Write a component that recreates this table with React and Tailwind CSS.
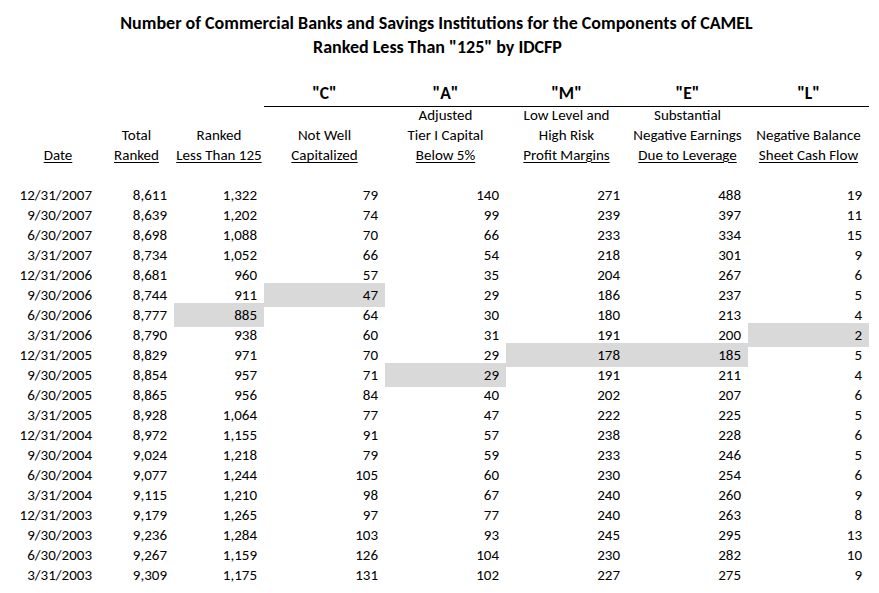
const rows = [
  ["12/31/2007", "8,611", "1,322", "79", "140", "271", "488", "19"],
  ["9/30/2007", "8,639", "1,202", "74", "99", "239", "397", "11"],
  ["6/30/2007", "8,698", "1,088", "70", "66", "233", "334", "15"],
  ["3/31/2007", "8,734", "1,052", "66", "54", "218", "301", "9"],
  ["12/31/2006", "8,681", "960", "57", "35", "204", "267", "6"],
  ["9/30/2006", "8,744", "911", "47", "29", "186", "237", "5"],
  ["6/30/2006", "8,777", "885", "64", "30", "180", "213", "4"],
  ["3/31/2006", "8,790", "938", "60", "31", "191", "200", "2"],
  ["12/31/2005", "8,829", "971", "70", "29", "178", "185", "5"],
  ["9/30/2005", "8,854", "957", "71", "29", "191", "211", "4"],
  ["6/30/2005", "8,865", "956", "84", "40", "202", "207", "6"],
  ["3/31/2005", "8,928", "1,064", "77", "47", "222", "225", "5"],
  ["12/31/2004", "8,972", "1,155", "91", "57", "238", "228", "6"],
  ["9/30/2004", "9,024", "1,218", "79", "59", "233", "246", "5"],
  ["6/30/2004", "9,077", "1,244", "105", "60", "230", "254", "6"],
  ["3/31/2004", "9,115", "1,210", "98", "67", "240", "260", "9"],
  ["12/31/2003", "9,179", "1,265", "97", "77", "240", "263", "8"],
  ["9/30/2003", "9,236", "1,284", "103", "93", "245", "295", "13"],
  ["6/30/2003", "9,267", "1,159", "126", "104", "230", "282", "10"],
  ["3/31/2003", "9,309", "1,175", "131", "102", "227", "275", "9"],
]

// cells shaded grey in the sheet, keyed "row-col"
const shaded = new Set(["5-3", "6-2", "7-7", "8-5", "8-6", "9-4"])

const cols = "grid grid-cols-[82px_75px_90px_121px_121px_121px_121px_121px]"

const headers = [
  ["", "", "Date"],
  ["", "Total", "Ranked"],
  ["", "Ranked", "Less Than 125"],
  ["", "Not Well", "Capitalized"],
  ["Adjusted", "Tier I Capital", "Below 5%"],
  ["Low Level and", "High Risk", "Profit Margins"],
  ["Substantial", "Negative Earnings", "Due to Leverage"],
  ["", "Negative Balance", "Sheet Cash Flow"],
]

export default function App() {
  return (
    <div
      className="w-[879px] h-[593px] bg-white text-black overflow-hidden"
      style={{ fontFamily: "Calibri, Carlito, Lato, 'Liberation Sans', sans-serif" }}
    >
      <div className="pt-[11px] text-center font-bold text-[18px] leading-[24px]">
        <div className="pr-[6px]">Number of Commercial Banks and Savings Institutions for the Components of CAMEL</div>
        <div className="pr-[4px]">Ranked Less Than "125" by IDCFP</div>
      </div>

      <div className="ml-[17px] mt-[22px] text-[15px]">
        <div className={`${cols} h-[23px] font-bold text-[17.5px] leading-[25px]`}>
          <div />
          <div />
          <div />
          {['"C"', '"A"', '"M"', '"E"', '"L"'].map((l) => (
            <div key={l} className="text-center border-b border-black">
              {l}
            </div>
          ))}
        </div>

        {[0, 1, 2].map((line) => (
          <div key={line} className={`${cols} h-[20px] leading-[23px]`}>
            {headers.map((h, i) => (
              <div key={i} className="text-center whitespace-nowrap">
                <span className={line === 2 ? "underline underline-offset-[2px] decoration-1" : ""}>
                  {h[line]}
                </span>
              </div>
            ))}
          </div>
        ))}

        <div className="h-[19px]" />

        {rows.map((r, ri) => (
          <div key={ri} className={`${cols} h-[20px] leading-[24px]`}>
            {r.map((v, ci) => (
              <div
                key={ci}
                className={`text-right pr-[7px] ${shaded.has(`${ri}-${ci}`) ? "bg-[#d9d9d9]" : ""}`}
              >
                {v}
              </div>
            ))}
          </div>
        ))}
      </div>
    </div>
  )
}
